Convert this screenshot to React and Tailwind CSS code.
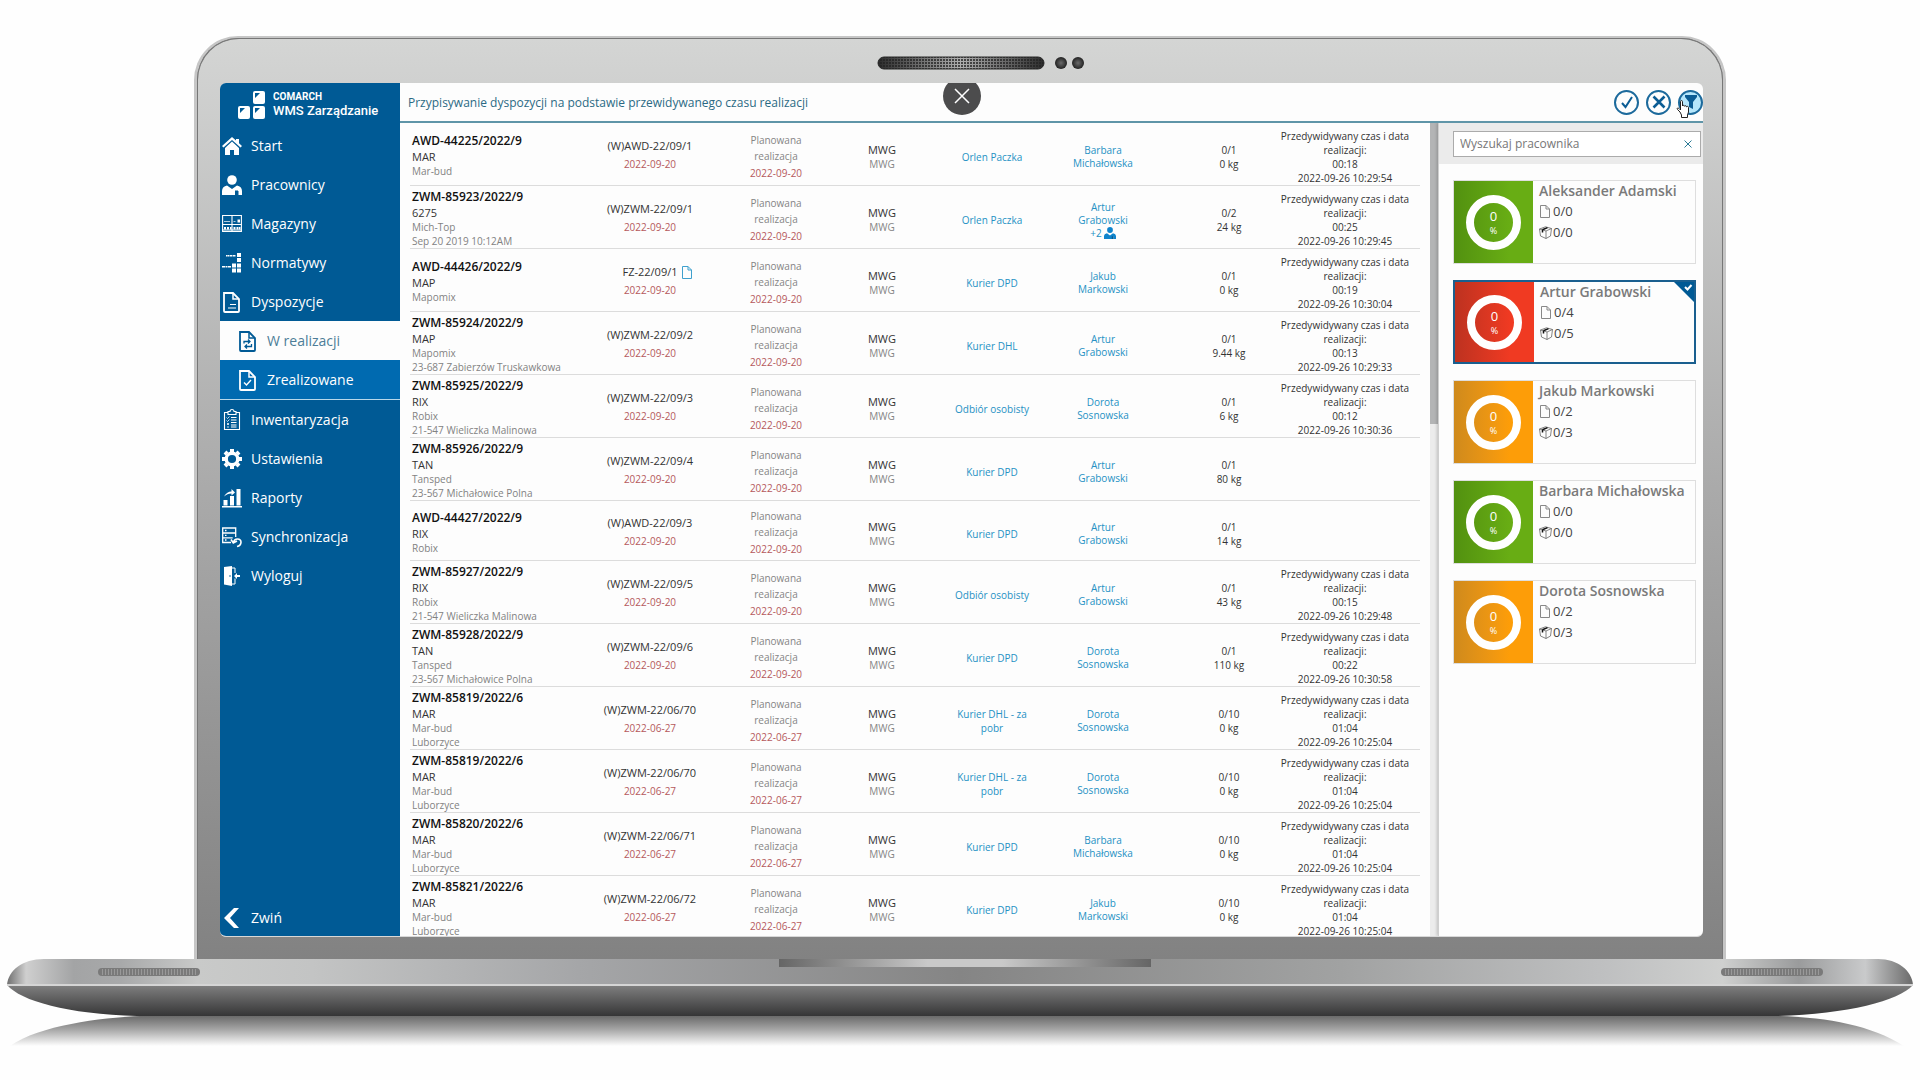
import React, { useState } from "react";
import clsx from "clsx";

const menu = [
  { name: "Start", icon: "home" },
  { name: "Pracownicy", icon: "user" },
  { name: "Magazyny", icon: "shelves" },
  { name: "Normatywy", icon: "norms" },
  { name: "Dyspozycje", icon: "doc" },
  { name: "W realizacji", icon: "docSync", sub: true },
  { name: "Zrealizowane", icon: "docCheck", sub: true, last: true },
  { name: "Inwentaryzacja", icon: "clipboard" },
  { name: "Ustawienia", icon: "gear" },
  { name: "Raporty", icon: "chart" },
  { name: "Synchronizacja", icon: "sync" },
  { name: "Wyloguj", icon: "logout" },
];

const orders = [
  { no: "AWD-44225/2022/9", code: "MAR", lines: ["Mar-bud"], doc: "(W)AWD-22/09/1", date: "2022-09-20", courier: "Orlen Paczka", who: ["Barbara", "Michałowska"], qty: "0/1", kg: "0 kg", time: "00:18", end: "2022-09-26 10:29:54" },
  { no: "ZWM-85923/2022/9", code: "6275", lines: ["Mich-Top", "Sep 20 2019 10:12AM"], doc: "(W)ZWM-22/09/1", date: "2022-09-20", courier: "Orlen Paczka", who: ["Artur", "Grabowski"], more: "+2", qty: "0/2", kg: "24 kg", time: "00:25", end: "2022-09-26 10:29:45" },
  { no: "AWD-44426/2022/9", code: "MAP", lines: ["Mapomix"], doc: "FZ-22/09/1", file: true, date: "2022-09-20", courier: "Kurier DPD", who: ["Jakub", "Markowski"], qty: "0/1", kg: "0 kg", time: "00:19", end: "2022-09-26 10:30:04" },
  { no: "ZWM-85924/2022/9", code: "MAP", lines: ["Mapomix", "23-687 Zabierzów Truskawkowa"], doc: "(W)ZWM-22/09/2", date: "2022-09-20", courier: "Kurier DHL", who: ["Artur", "Grabowski"], qty: "0/1", kg: "9.44 kg", time: "00:13", end: "2022-09-26 10:29:33" },
  { no: "ZWM-85925/2022/9", code: "RIX", lines: ["Robix", "21-547 Wieliczka Malinowa"], doc: "(W)ZWM-22/09/3", date: "2022-09-20", courier: "Odbiór osobisty", who: ["Dorota", "Sosnowska"], qty: "0/1", kg: "6 kg", time: "00:12", end: "2022-09-26 10:30:36" },
  { no: "ZWM-85926/2022/9", code: "TAN", lines: ["Tansped", "23-567 Michałowice Polna"], doc: "(W)ZWM-22/09/4", date: "2022-09-20", courier: "Kurier DPD", who: ["Artur", "Grabowski"], qty: "0/1", kg: "80 kg" },
  { no: "AWD-44427/2022/9", code: "RIX", lines: ["Robix"], doc: "(W)AWD-22/09/3", date: "2022-09-20", courier: "Kurier DPD", who: ["Artur", "Grabowski"], qty: "0/1", kg: "14 kg" },
  { no: "ZWM-85927/2022/9", code: "RIX", lines: ["Robix", "21-547 Wieliczka Malinowa"], doc: "(W)ZWM-22/09/5", date: "2022-09-20", courier: "Odbiór osobisty", who: ["Artur", "Grabowski"], qty: "0/1", kg: "43 kg", time: "00:15", end: "2022-09-26 10:29:48" },
  { no: "ZWM-85928/2022/9", code: "TAN", lines: ["Tansped", "23-567 Michałowice Polna"], doc: "(W)ZWM-22/09/6", date: "2022-09-20", courier: "Kurier DPD", who: ["Dorota", "Sosnowska"], qty: "0/1", kg: "110 kg", time: "00:22", end: "2022-09-26 10:30:58" },
  { no: "ZWM-85819/2022/6", code: "MAR", lines: ["Mar-bud", "Luborzyce"], doc: "(W)ZWM-22/06/70", date: "2022-06-27", courier: "Kurier DHL - za pobr", who: ["Dorota", "Sosnowska"], qty: "0/10", kg: "0 kg", time: "01:04", end: "2022-09-26 10:25:04" },
  { no: "ZWM-85819/2022/6", code: "MAR", lines: ["Mar-bud", "Luborzyce"], doc: "(W)ZWM-22/06/70", date: "2022-06-27", courier: "Kurier DHL - za pobr", who: ["Dorota", "Sosnowska"], qty: "0/10", kg: "0 kg", time: "01:04", end: "2022-09-26 10:25:04" },
  { no: "ZWM-85820/2022/6", code: "MAR", lines: ["Mar-bud", "Luborzyce"], doc: "(W)ZWM-22/06/71", date: "2022-06-27", courier: "Kurier DPD", who: ["Barbara", "Michałowska"], qty: "0/10", kg: "0 kg", time: "01:04", end: "2022-09-26 10:25:04" },
  { no: "ZWM-85821/2022/6", code: "MAR", lines: ["Mar-bud", "Luborzyce"], doc: "(W)ZWM-22/06/72", date: "2022-06-27", courier: "Kurier DPD", who: ["Jakub", "Markowski"], qty: "0/10", kg: "0 kg", time: "01:04", end: "2022-09-26 10:25:04" },
];

const workers = [
  { name: "Aleksander Adamski", docs: "0/0", items: "0/0", color: "green" },
  { name: "Artur Grabowski", docs: "0/4", items: "0/5", color: "red" },
  { name: "Jakub Markowski", docs: "0/2", items: "0/3", color: "orange" },
  { name: "Barbara Michałowska", docs: "0/0", items: "0/0", color: "green" },
  { name: "Dorota Sosnowska", docs: "0/2", items: "0/3", color: "orange" },
];

const tiles = {
  green: "bg-linear-to-r from-[#529110] to-[#68ad14] to-70%",
  red: "bg-linear-to-r from-[#bd3220] to-[#f03a22] to-70%",
  orange: "bg-linear-to-r from-[#cf8a1c] to-[#fd9d08] to-70%",
};

const page = "M2 1h9l6 6v12a1 1 0 0 1-1 1H3a1 1 0 0 1-1-1z";

const icons = {
  home: (
    <>
      <path d="M10 1 0 10l1.500 1.600L10 4l8.500 7.600L20 10l-3-2.700V3h-3v1.600z" />
      <path d="M10 5.500 3 12v7h5v-5h4v5h5v-7z" />
    </>
  ),
  user: (
    <>
      <circle cx="10" cy="5" r="4.800" />
      <path d="M0 20v-4c0-3 2-5 5-5.500L10 14l5-3.500c3 .5 5 2.500 5 5.500v4h-3.500v-4h-1v4z" />
      <path d="M13 15.500h3v4.500h-3z" fill="#005a95" />
    </>
  ),
  shelves: (
    <>
      <path d="M.6 1.500h18.800v16H.6zM.6 10.500h18.800M10 1.500v16M.6 16h18.800" fill="none" stroke="currentColor" strokeWidth="1.100" />
      <path d="M2 13h2v2.500H2zM5 13h2v2.500H5zM8 13h1.500v2.500H8zM11.500 13h2v2.500h-2zM14.500 13h2v2.500h-2zM17 13h1.500v2.500H17zM15.500 5.500h2.500v3h-2.500z" />
      <path d="M2 7.500h6M11.500 7.500h2" stroke="currentColor" strokeWidth=".7" />
    </>
  ),
  norms: (
    <path d="M15 0h4v4h-4zM15 5h4v4h-4zM15 10.500h4v4h-4zM15 15.500h4v4h-4zM10 10.500h4v4h-4zM10 15.500h4v4h-4zM4 2h1.200v1.500H4zM5.500 2h2v1.500h-2zM8 2h2v1.500H8zM10.500 2h3v1.500h-3zM0 13h3v1.500H0zM3.500 13h2v1.500h-2zM6 13h3v1.500H6z" />
  ),
  doc: (
    <g fill="none" stroke="currentColor" strokeWidth="1.800">
      <path d={page} />
      <path d="M11 1v6h6" strokeWidth="1.500" />
      <path d="M8 12.500h6M6 16h8" strokeWidth="1.200" />
    </g>
  ),
  docSync: (
    <g fill="none" stroke="currentColor" strokeWidth="1.800">
      <path d={page} />
      <path d="M11 1v6h6" strokeWidth="1.500" />
      <path d="M6 12.500V10.500h6m-2-2 2 2-2 2M13.500 13v2.500H7m2-2-2 2 2 2" strokeWidth="1.300" />
    </g>
  ),
  docCheck: (
    <g fill="none" stroke="currentColor" strokeWidth="1.800">
      <path d={page} />
      <path d="M11 1v6h6" strokeWidth="1.500" />
      <path d="m6 12.500 2.500 2.500 4.500-5" strokeWidth="1.400" />
    </g>
  ),
  clipboard: (
    <g fill="none" stroke="currentColor" strokeWidth="1.100">
      <path d="M6 2.500H2.500v17h15v-17H14M6 1.500h2a2 2 0 0 1 4 0h2v3H6zM9 7.500h5.500M9 10h5.500M9 12.500h5.500M9 15h5.500M9 17h5.500" />
      <path d="m4.500 7.500 1 1 2-2M4.500 10.500l1 1 2-2M5 13l2 2M5 15l2-2M5 17h2" strokeWidth=".8" />
    </g>
  ),
  gear: (
    <>
      <circle cx="10" cy="10" r="5.800" fill="none" stroke="currentColor" strokeWidth="3.400" />
      <g stroke="currentColor" strokeWidth="4">
        <path d="M10 0v3M10 17v3M0 10h3M17 10h3M3 3l2 2M15 15l2 2M3 17l2-2M15 5l2-2" />
      </g>
    </>
  ),
  chart: <path d="M0 18h20v1.500H0zM1.500 12h4v5.500h-4zM8 8h4v9.500H8zM14.500 1h4v16.500h-4zM2 8.500C4 5 6.500 3.500 9.500 3.500V1L13 4.500 9.500 7.500v-2C6.500 5.500 4.500 6.500 2 8.500z" />,
  sync: (
    <g fill="none" stroke="currentColor" strokeWidth="1.300">
      <path d="M9 15.500H.7V1h13v9M.7 6h13M.7 10.800h10M3 3.500h1.500M3 8.400h1.500M3 13h1.500" />
      <path d="M15 19.500c5-1 5.500-7.500.5-7.500-2 0-3.500 1-4 3.500M9 12.500l2.300 3.500 3.700-2" strokeWidth="1.600" />
    </g>
  ),
  logout: (
    <>
      <path d="M2 1 10 0v20l-8-1.500z" />
      <path d="M10 2h3v5M13 12.500V18h-3" fill="none" stroke="currentColor" strokeWidth="1" />
      <path d="M12 10l3-3v2h3v2h-3v2z" />
      <circle cx="8" cy="10" r=".8" fill="#005a95" />
    </>
  ),
  back: <path d="m12 0 5 0-9 10 9 10h-5L2 10z" />,
};

function Icon({ name, className }) {
  return (
    <svg viewBox="0 0 20 20" fill="currentColor" className={clsx("shrink-0 overflow-visible", className)}>
      {icons[name]}
    </svg>
  );
}

function File({ className }) {
  return (
    <svg viewBox="0 0 10 13" fill="none" stroke="currentColor" className={className}>
      <path d="M.5.5h5.500l3.500 3.500v8.500h-9zM6 .5V4h3.500" />
    </svg>
  );
}

function Box() {
  return (
    <svg viewBox="0 0 13 13" fill="none" stroke="#666" strokeWidth=".8" className="h-[13px] w-[13px]">
      <path d="M6.500.8 12.500 2.500 11.500 10l-4.500 2.500L1.500 10 .5 3zM.5 3 7 5l5.500-2.500M7 5v7.500" />
      <path d="m3.500 3.800 5-2.200M3.500 3.800v2.700" stroke="#111" strokeWidth="1.500" />
    </svg>
  );
}

function Sidebar() {
  const [active, setActive] = useState("W realizacji");

  return (
    <nav className="flex w-[180px] shrink-0 flex-col bg-[#005a95] text-white">
      <div className="flex h-[43px] items-center gap-2 pl-[18px] font-[Roboto]">
        <svg viewBox="0 0 27 28" className="h-7 w-[27px] shrink-0">
          <g fill="#fff">
            <rect x="15" y="0" width="12" height="13" rx="2" />
            <rect x="0" y="15" width="12" height="13" rx="2" />
            <rect x="15" y="15" width="12" height="13" rx="2" />
          </g>
          <path d="M17 2h5l-5 5zM2 17h5l-5 5zM17 17h5l-5 5z" fill="#005a95" />
        </svg>
        <div>
          <div className="text-[10px] leading-3 font-bold">COMARCH</div>
          <div className="text-[13px] leading-4 font-medium whitespace-nowrap">WMS Zarządzanie</div>
        </div>
      </div>
      {menu.map((item) => (
        <button
          key={item.name}
          type="button"
          onClick={() => { setActive(item.name) }}
          className={clsx(
            "flex shrink-0 items-center text-left text-sm",
            item.sub ? "gap-[9px] pl-[18px]" : "gap-[9px] pl-[2px]",
            item.last ? "h-10 border-b border-[#b8d8ea]" : "h-[39px]",
            active == item.name ? "bg-[#fdfdfd] text-[#005a95]" : item.sub && "bg-[#006ab0]"
          )}
        >
          <Icon name={item.icon} className="h-5 w-5" />
          <span className={clsx(active == item.name && "text-[#4d7d98]")}>{item.name}</span>
        </button>
      ))}
      <button type="button" className="mt-auto flex h-9 items-center gap-[9px] pl-[2px] text-left text-sm">
        <Icon name="back" className="h-5 w-5" />
        Zwiń
      </button>
    </nav>
  );
}

function Header() {
  const round = "flex size-[25px] items-center justify-center rounded-full border-2 border-[#1c6a9c]"
  return (
    <header className="relative flex h-10 shrink-0 items-center border-b-2 border-[#5f95a8] pl-2">
      <h1 className="pt-[2px] text-xs text-[#2b6a84]">Przypisywanie dyspozycji na podstawie przewidywanego czasu realizacji</h1>
      <div className="ml-auto flex gap-[7px]">
        <button type="button" aria-label="Zatwierdź" className={round}>
          <svg viewBox="0 0 14 14" className="size-[14px]"><path d="m2 8 3.500 4L12 2" fill="none" stroke="#0b5c94" strokeWidth="2" /></svg>
        </button>
        <button type="button" aria-label="Anuluj" className={round}>
          <svg viewBox="0 0 14 14" className="size-[14px]"><path d="m1.500 1.500 11 11m0-11-11 11" fill="none" stroke="#0b5c94" strokeWidth="2.600" /></svg>
        </button>
        <button type="button" aria-label="Filtr" className={clsx(round, "relative bg-[#b5e6fb]")}>
          <svg viewBox="0 0 14 14" className="size-[14px]"><path d="M1 0h12v2L9 7v7l-4-2V7L1 2z" fill="#0b5c94" /></svg>
          <svg viewBox="0 0 14 18" className="absolute top-2 -left-1 h-[18px] w-[14px]">
            <path d="M4 12 1.500 9.500c-1-1.500.5-2 1.500-1L4.500 10V1.500C4.500.3 6.500.3 6.500 1.500V6c.3-1 2-1 2 .3.300-.9 2-.8 2 .5.400-.8 2-.6 2 .7V12l-1 3v2.500h-6V15z" fill="#fff" stroke="#222" />
          </svg>
        </button>
      </div>
    </header>
  );
}

function Orders() {
  return (
    <div className="min-w-0 flex-1 overflow-hidden px-[10px]">
      <table className="w-full table-fixed border-collapse text-[10px] leading-[14px] text-[#333]">
        <colgroup>
          <col />
          <col className="w-[148px]" />
          <col className="w-[104px]" />
          <col className="w-[108px]" />
          <col className="w-[112px]" />
          <col className="w-[110px]" />
          <col className="w-[112px]" />
          <col className="w-[150px]" />
        </colgroup>
        <tbody>
          {orders.map((o, i) => (
            <tr key={i} className="border-b border-[#dcdcdc] text-center">
              <td className="pt-[2px] pl-[2px] text-left whitespace-nowrap">
                <div className="text-xs leading-[18px] font-semibold text-[#111]">{o.no}</div>
                <div className="text-[11px] leading-[14px]">{o.code}</div>
                {o.lines.map((line) => (
                  <div key={line} className="text-[#828282]">{line}</div>
                ))}
              </td>
              <td className="pt-[2px] leading-[18px]">
                <div className="flex items-center justify-center gap-1 text-[11px]">
                  {o.doc}
                  {o.file && <File className="-mr-[14px] h-[13px] w-[10px] text-[#3fa0cd]" />}
                </div>
                <div className="text-[#b5595c]">{o.date}</div>
              </td>
              <td className="pt-[7px] pb-[2px] leading-4 text-[#858585]">
                Planowana<br />realizacja
                <div className="leading-[18px] text-[#b5595c]">{o.date}</div>
              </td>
              <td className="pt-[6px]">
                <div className="text-[11px] leading-[14px]">MWG</div>
                <div className="text-[#858585]">MWG</div>
              </td>
              <td className="px-4 pt-[6px]">
                <a href="#" className="block text-[#2591c4]">{o.courier}</a>
              </td>
              <td className="pt-[6px] leading-[13px]">
                <a href="#" className="block text-[#2591c4]">
                  {o.who[0]}<br />{o.who[1]}
                  {o.more &&
                    <span className="flex items-center justify-center gap-[2px]">
                      {o.more}<Icon name="user" className="size-3 text-[#0f84cc]" />
                    </span>
                  }
                </a>
              </td>
              <td className="pt-[6px] pl-[30px]">{o.qty}<br />{o.kg}</td>
              <td className="pt-[6px]">
                {o.time && <>Przedywidywany czas i data<br />realizacji:<br />{o.time}<br />{o.end}</>}
              </td>
            </tr>
          ))}
        </tbody>
      </table>
    </div>
  );
}

function Worker({ worker, selected, onClick }) {
  return (
    <button
      type="button"
      onClick={onClick}
      className={clsx(
        "relative flex h-[84px] w-full text-left",
        selected ? "border-2 border-[#1a5f8f]" : "border border-[#dedede]"
      )}
    >
      <span className={clsx("flex h-full w-[79px] shrink-0 items-center justify-center", tiles[worker.color])}>
        <span className="flex size-[55px] flex-col items-center justify-center rounded-full border-8 border-white text-white">
          <span className="text-[13px] leading-[18px]">0</span>
          <span className="text-[9px] leading-3">%</span>
        </span>
      </span>
      <span className="pl-[6px] text-[13px] text-[#444]">
        <span className="block text-sm leading-[20px] font-semibold whitespace-nowrap text-[#7a7a7a]">{worker.name}</span>
        <span className="flex h-[21px] items-center gap-[2px]"><File className="mx-[1px] h-[13px] w-[10px] text-[#888]" />{worker.docs}</span>
        <span className="flex h-[21px] items-center gap-[1px]"><Box />{worker.items}</span>
      </span>
      {selected &&
        <svg viewBox="0 0 20 20" className="absolute top-0 right-0 size-5">
          <path d="M0 0h20v20z" fill="#005a95" />
          <path d="m11 5 2.500 2.500L17.500 3" fill="none" stroke="#fff" strokeWidth="2" />
        </svg>
      }
    </button>
  );
}

function Workers() {
  const [search, setSearch] = useState("");
  const [selected, setSelected] = useState("Artur Grabowski");

  return (
    <aside className="flex w-[265px] shrink-0 flex-col border-l border-[#cfcfcf] shadow-[-1px_0_3px_rgba(0,0,0,0.2)]">
      <div className="h-[41px] shrink-0 bg-[#ebebeb] pt-2 pr-[2px] pl-[14px]">
        <div className="flex h-[26px] items-center border border-[#ababab] bg-white">
          <input
            type="text"
            aria-label="Wyszukaj pracownika"
            placeholder="Wyszukaj pracownika"
            value={search}
            onChange={(e) => { setSearch(e.target.value) }}
            className="min-w-0 flex-1 pl-[6px] text-xs outline-none placeholder:text-[#777]"
          />
          <button type="button" aria-label="Wyczyść" onClick={() => { setSearch("") }} className="px-2">
            <svg viewBox="0 0 8 8" className="size-2"><path d="m.5.5 7 7m0-7-7 7" stroke="#2b7a96" /></svg>
          </button>
        </div>
      </div>
      <div className="flex flex-col gap-4 pt-4 pr-[7px] pl-[14px]">
        {workers.filter((w) => w.name.toLowerCase().includes(search.toLowerCase())).map((w) => (
          <Worker key={w.name} worker={w} selected={selected == w.name} onClick={() => { setSelected(w.name) }} />
        ))}
      </div>
    </aside>
  );
}

function Speaker() {
  return (
    <svg viewBox="0 0 210 14" className="h-[14px] w-[210px]">
      <defs>
        <linearGradient id="speaker">
          <stop offset="0" stopColor="#2c2c2c" />
          <stop offset=".5" stopColor="#b0b0b0" />
          <stop offset="1" stopColor="#2c2c2c" />
        </linearGradient>
        <pattern id="mesh" width="3" height="3" patternUnits="userSpaceOnUse">
          <circle cx="1" cy="1" r="1" fill="#222" />
        </pattern>
        <radialGradient id="lens">
          <stop offset="0" stopColor="#6a6a6a" />
          <stop offset="1" stopColor="#222" />
        </radialGradient>
      </defs>
      <rect x="1" y="1" width="166" height="12" rx="6" fill="url(#speaker)" />
      <rect x="1" y="1" width="166" height="12" rx="6" fill="url(#mesh)" stroke="#2a2a2a" />
      <circle cx="184" cy="7" r="6" fill="url(#lens)" />
      <circle cx="201" cy="7" r="6" fill="url(#lens)" />
    </svg>
  );
}

function Base() {
  return (
    <svg viewBox="0 0 1920 90" preserveAspectRatio="none" className="h-[90px] w-full shrink-0">
      <defs>
        <linearGradient id="deck">
          <stop offset="0" stopColor="#6f6f6f" />
          <stop offset=".01" stopColor="#cfcfcf" />
          <stop offset=".035" stopColor="#a3a4a5" />
          <stop offset=".06" stopColor="#a8a9aa" />
          <stop offset=".1" stopColor="#c9cac9" />
          <stop offset=".16" stopColor="#c3c4c4" />
          <stop offset=".3" stopColor="#a5a6a8" />
          <stop offset=".5" stopColor="#858585" />
          <stop offset=".7" stopColor="#a1a2a2" />
          <stop offset=".84" stopColor="#bfc0c1" />
          <stop offset=".9" stopColor="#cfd0cf" />
          <stop offset=".94" stopColor="#9a9b9c" />
          <stop offset=".975" stopColor="#c9cacb" />
          <stop offset="1" stopColor="#6a6a6a" />
        </linearGradient>
        <linearGradient id="belly" x2="0" y2="1">
          <stop offset="0" stopColor="#808080" />
          <stop offset="1" stopColor="#353536" />
        </linearGradient>
        <linearGradient id="shadow" x2="0" y2="1">
          <stop offset="0" stopColor="#6a6a6a" />
          <stop offset=".45" stopColor="#a6a6a6" />
          <stop offset="1" stopColor="#fefefe" />
        </linearGradient>
        <linearGradient id="notch">
          <stop offset="0" stopColor="#656565" />
          <stop offset=".4" stopColor="#c9c9c9" />
          <stop offset=".6" stopColor="#c9c9c9" />
          <stop offset="1" stopColor="#656565" />
        </linearGradient>
        <pattern id="grill" width="3" height="9" patternUnits="userSpaceOnUse">
          <path d="M0 0h1v9H0z" fill="#999" />
        </pattern>
      </defs>
      <path d="M140 57C100 59 40 66 10 87h1894C1870 66 1830 59 1780 57z" fill="url(#shadow)" />
      <path d="M7 26C8 12 22 0 44 0h1834c20 0 34 12 35 26z" fill="url(#deck)" />
      <path d="M7 26c14 16 60 29 130 31h1640c70-2 122-15 136-31z" fill="url(#belly)" />
      <path d="M7 26h1906" stroke="#d5d5d5" strokeWidth="2" />
      <path d="M779 0h372v8H779z" fill="url(#notch)" />
      <g fill="#7a7a7a">
        <rect x="98" y="9" width="102" height="8" rx="4" />
        <rect x="1721" y="9" width="102" height="8" rx="4" />
      </g>
      <path d="M102 10h94v6h-94zM1725 10h94v6h-94z" fill="url(#grill)" />
    </svg>
  );
}

export default function App() {
  return (
    <div className="flex h-screen flex-col overflow-hidden bg-[#fefefe] pt-9 pb-[31px] font-['Open_Sans',sans-serif]">
      <div className="mx-[194px] flex min-h-0 flex-1 flex-col rounded-t-[44px] border-x-[3px] border-t-2 border-[#c6c6c6] bg-[#777]">
        <div className="flex min-h-0 flex-1 flex-col rounded-t-[42px] border-x border-t border-[#777] bg-linear-to-b from-[#d4d5d4] via-[#a9a9a9] to-[#828282] pr-[19px] pb-[22px] pl-[22px]">
          <div className="flex h-[44px] items-center justify-center pt-1 pl-10">
            <Speaker />
          </div>
          <div className="relative flex min-h-0 flex-1 overflow-hidden rounded-md border-b border-[#d8d8d8] bg-[#fdfdfd]">
            <Sidebar />
            <div className="flex min-w-0 flex-1 flex-col">
              <Header />
              <div className="flex min-h-0 flex-1">
                <Orders />
                <div className="w-2 shrink-0 bg-[#ececec]">
                  <div className="h-[37%] bg-[#b3b4b5]"></div>
                </div>
                <Workers />
              </div>
            </div>
            <button type="button" aria-label="Zamknij" className="absolute -top-[6px] left-1/2 flex size-[38px] -translate-x-1/2 items-center justify-center rounded-full bg-[#4c4c4d]">
              <svg viewBox="0 0 16 16" className="size-4"><path d="m1 1 14 14M15 1 1 15" stroke="#fff" strokeWidth="1.500" /></svg>
            </button>
          </div>
        </div>
      </div>
      <Base />
    </div>
  );
}
